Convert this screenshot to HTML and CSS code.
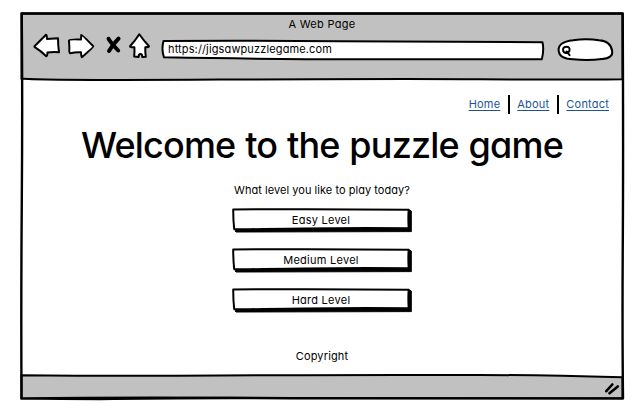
FILE: index.html
```html
<!DOCTYPE html>
<html lang="en">
<head>
<meta charset="utf-8">
<title>A Web Page</title>
<link rel="stylesheet" href="styles.css">
</head>
<body>
<div class="window">
  <svg class="frame" viewBox="0 0 637 411" aria-hidden="true">
    <path class="bar" d="M21.5 13.5L622.5 13.5L622.5 79.2Q560 79.8 480 79.2T220 79.6T21.5 78.5Z"/>
    <path class="bar" d="M21.5 375.3Q120 376.3 220 375.5T480 375Q540 375 622.5 377.3L622.5 398.5Q400 399 260 398T21.5 398.5Z"/>
    <path class="edge" d="M21.7 13.5Q200 13.8 330 13.5T622.7 13.5Q623.4 150 622.8 240T623 398.3Q480 399 330 398.4Q190 397.4 100 399Q60 399 21.5 398.4Q21 300 21.8 200T21.7 13.5Z"/>
  </svg>
  <header class="chrome">
    <div class="title">A Web Page</div>
    <div class="toolbar">
      <svg class="nav-icons" viewBox="30 32 124 28" aria-hidden="true">
        <path class="icon" d="M34.5 46.3L46 34.8Q46.8 34.6 47 39L58 38.3Q58 45 59 52.3Q53 51.8 47.4 52.6Q47.5 56 46.3 56.2Q41 51 34.5 46.8Z"/>
        <path class="icon" d="M69 40.5Q69.5 39 81 39.5L81.3 34.8Q82 34.4 93.3 46.3Q93.6 47 81.8 57.2Q81.2 57 81 52.3Q75 52 70.3 53.3Q69 53 69.4 48Z"/>
        <path class="cross" d="M108.5 38.7Q111 43 118.2 50.5M118.6 38.5Q113 44 109 51"/>
        <path class="icon" d="M139.3 34.3Q144 41 149 46.3Q148.5 47.3 145.3 47.3Q145.1 52 145.8 56.8L142.3 57Q142.3 54 140.5 54Q138.6 54 138.6 57L134.2 56.6Q134.6 52 134.4 47.3Q130 47.5 130 46.2Q135 41 139.3 34.3Z"/>
      </svg>
      <div class="address">
        <svg class="outline" viewBox="161 39 384 22" aria-hidden="true"><path class="icon" d="M163.5 41Q250 40.6 340 41.2T542.5 42.3Q544.2 50 541.8 59.3Q460 59 370 59.2T164 57.3Q161.2 50 163.5 41Z"/></svg>
        <span class="url">https://jigsawpuzzlegame.com</span>
      </div>
      <svg class="search" viewBox="556 37 59 26" aria-hidden="true">
        <path class="icon" d="M558.7 51Q557.5 42 573 40.2Q587 38.2 599 40.3Q611 41 612.2 51.5Q613 58 602 59Q588 61 573 59.3Q559.5 59 558.7 51Z"/>
        <path class="lens" d="M563 49.5Q563.3 46.6 566.5 46.7Q569.8 46.8 569.6 50Q569 53 566.3 53Q563 53 563 49.5M566.5 51.5L569.6 55.2"/>
      </svg>
    </div>
  </header>
  <main class="page">
    <nav class="links">
      <a class="link home" href="#">Home</a>
      <a class="link about" href="#">About</a>
      <a class="link contact" href="#">Contact</a>
    </nav>
    <h1 class="heading">Welcome to the puzzle game</h1>
    <p class="question">What level you like to play today?</p>
    <div class="levels">
      <button class="level"><svg class="outline" viewBox="0 0 180 25" aria-hidden="true"><path class="shadow" d="M3 20L177 20L177 2L179.3 3L179.3 23.6L4 24Q3 24 3 20Z"/><path class="box" d="M1.2 1.5Q90 .8 176.7 1.8Q176 10 176.7 20.3Q120 19.8 70 20.6T2.2 21Q1.2 12 1.2 1.5Z"/></svg><span class="label easy">Easy Level</span></button>
      <button class="level"><svg class="outline" viewBox="0 0 180 25" aria-hidden="true"><path class="shadow" d="M3 20L177 20L177 2L179.3 3L179.3 23.6L4 24Q3 24 3 20Z"/><path class="box" d="M1.2 1.5Q90 .8 176.7 1.8Q176 10 176.7 20.3Q120 19.8 70 20.6T2.2 21Q1.2 12 1.2 1.5Z"/></svg><span class="label medium">Medium Level</span></button>
      <button class="level"><svg class="outline" viewBox="0 0 180 25" aria-hidden="true"><path class="shadow" d="M3 20L177 20L177 2L179.3 3L179.3 23.6L4 24Q3 24 3 20Z"/><path class="box" d="M1.2 1.5Q90 .8 176.7 1.8Q176 10 176.7 20.3Q120 19.8 70 20.6T2.2 21Q1.2 12 1.2 1.5Z"/></svg><span class="label hard">Hard Level</span></button>
    </div>
    <p class="copyright">Copyright</p>
  </main>
  <footer class="status">
    <svg class="grip" viewBox="604 382 16 13" aria-hidden="true"><path d="M606.3 391.2L612.3 384.5M609.5 393.3L617.8 386.5"/></svg>
  </footer>
</div>
</body>
</html>
```
FILE: styles.css
```css
* { box-sizing: border-box; }
body {
  margin: 0;
  background: #fff;
  color: #000;
  font: 11px/16px Inter, "Liberation Sans", sans-serif;
  font-feature-settings: "cv11", "calt" 0;
}
.window {
  position: relative;
  width: 637px;
  height: 411px;
  padding: 13px 14px 12px 21px;
  display: flex;
  flex-direction: column;
}
svg { display: block; }
.frame { position: absolute; inset: 0; width: 637px; height: 411px; }
.bar { fill: #c1c1c1; stroke: #000; stroke-width: 2; }
.edge { fill: none; stroke: #000; stroke-width: 2.4; stroke-linejoin: round; }
.chrome { position: relative; height: 66px; padding-top: 3px; }
.title { height: 16px; text-align: center; letter-spacing: 0.3px; }
.toolbar { display: flex; align-items: flex-start; padding-left: 9px; }
.nav-icons { width: 124px; height: 28px; }
.icon { fill: #fff; stroke: #000; stroke-width: 2; stroke-linejoin: round; }
.cross { fill: none; stroke: #000; stroke-width: 3.9; stroke-linecap: round; }
.address { position: relative; width: 384px; height: 22px; margin: 7px 0 0 7px; padding: 2px 0 0 7px; }
.outline { position: absolute; inset: 0; width: 100%; height: 100%; }
.url { position: relative; letter-spacing: 0.13px; }
.search { width: 59px; height: 26px; margin: 5px 0 0 11px; }
.lens { fill: none; stroke: #000; stroke-width: 1.9; stroke-linecap: round; }
.page {
  position: relative;
  height: 296px;
  padding-top: 16px;
  display: flex;
  flex-direction: column;
  align-items: center;
}
.links { align-self: flex-end; display: flex; margin-right: 14px; height: 19px; }
.link { color: #1b5693; line-height: 18px; letter-spacing: 0.2px; text-underline-offset: 2px; text-decoration-thickness: 1px; }
.link + .link { margin-left: 7.5px; padding-left: 7.5px; border-left: 2px solid #000; }
.heading {
  margin: 10px 0 0;
  height: 44px;
  font-size: 36px;
  font-weight: 500;
  line-height: 43px;
  letter-spacing: -0.82px;
  word-spacing: 1px;
  white-space: nowrap;
}
.question { margin: 14px 0 0; line-height: 16px; letter-spacing: 0.04px; }
.levels { display: flex; flex-direction: column; gap: 15px; margin-top: 10px; }
.level {
  position: relative;
  width: 180px;
  height: 25px;
  padding: 0 2px 2px 0;
  border: 0;
  background: none;
  color: inherit;
  font: inherit;
  font-feature-settings: inherit;
}
.shadow { fill: #000; stroke: #000; stroke-width: 1; }
.box { fill: #fff; stroke: #000; stroke-width: 2; stroke-linejoin: round; }
.label { position: relative; letter-spacing: 0.25px; }
.copyright { margin: 35px 0 0; letter-spacing: 0.15px; }
.status { position: relative; height: 24px; display: flex; justify-content: flex-end; padding: 7px 3px 0 0; }
.grip { width: 16px; height: 13px; fill: none; stroke: #000; stroke-width: 2.6; stroke-linecap: round; }
```
